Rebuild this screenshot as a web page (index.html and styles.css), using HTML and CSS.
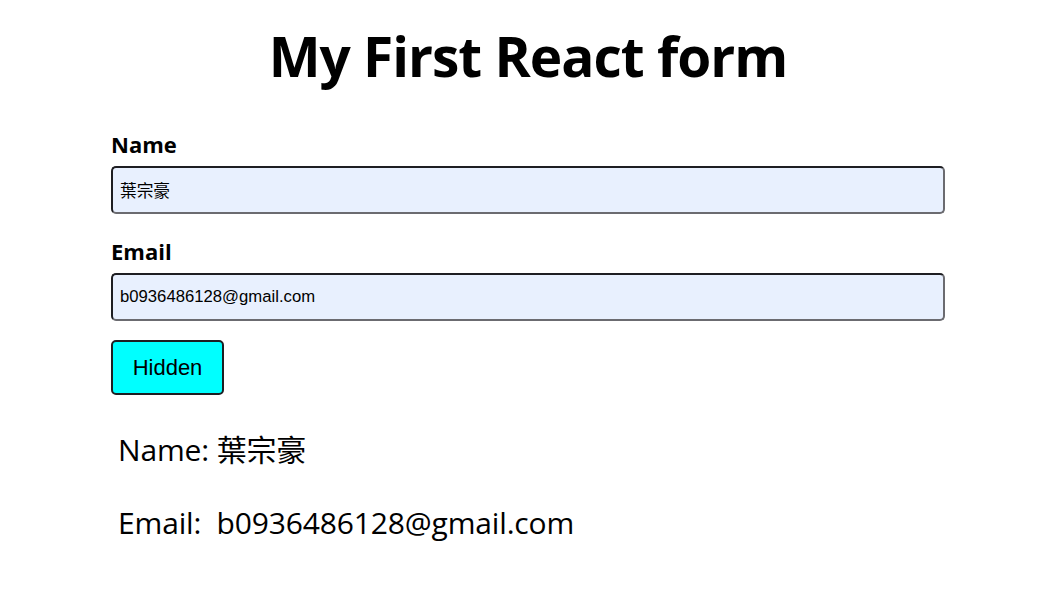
FILE: index.html
```html
<!DOCTYPE html>
<html lang="zh-Hant">
<head>
<meta charset="utf-8">
<title>My First React form</title>
<link rel="stylesheet" href="styles.css">
</head>
<body>
<div class="app">
  <h1 class="title">My First React form</h1>
  <form class="form">
    <label class="field">
      <span class="label">Name</span>
      <input class="input" type="text" value="葉宗豪">
    </label>
    <label class="field field-next">
      <span class="label">Email</span>
      <input class="input" type="text" value="b0936486128@gmail.com">
    </label>
    <button class="btn" type="button">Hidden</button>
  </form>
  <div class="output">
    <p class="out-line">Name: 葉宗豪</p>
    <p class="out-line">Email:&nbsp; b0936486128@gmail.com</p>
  </div>
</div>
</body>
</html>
```
FILE: styles.css
```css
html, body {
  margin: 0;
  padding: 0;
  background: #ffffff;
}
body {
  font-family: "Open Sans", "Noto Sans CJK TC", sans-serif;
  color: #000;
}
.app {
  width: 834px;
  margin-left: 111px;
  display: flex;
  flex-direction: column;
}
.title {
  margin: 20px 0 0 0;
  text-align: center;
  font-size: 55px;
  line-height: 72px;
  font-weight: 700;
  letter-spacing: -1px;
}
.form {
  margin-top: 37px;
  display: flex;
  flex-direction: column;
  align-items: flex-start;
}
.field {
  display: flex;
  flex-direction: column;
  width: 100%;
}
.field-next {
  margin-top: 22px;
}
.label {
  font-size: 22px;
  font-weight: 700;
  line-height: 30px;
  margin-bottom: 7px;
}
.input {
  box-sizing: border-box;
  width: 100%;
  height: 48px;
  border: 2px solid #1e1e22;
  border-right-color: #6b6b70;
  border-bottom-color: #6b6b70;
  border-radius: 5px;
  background: #e8f0fe;
  padding: 0 0 0 7px;
  font-family: "Liberation Sans", "Noto Sans CJK TC", sans-serif;
  font-size: 16.7px;
  color: #000;
}
.btn {
  box-sizing: border-box;
  margin-top: 19px;
  width: 113px;
  height: 55px;
  background: #00ffff;
  border: 2px solid #1e1e22;
  border-radius: 5px;
  font-family: "Liberation Sans", sans-serif;
  font-size: 22px;
  color: #000;
  padding: 0;
}
.output {
  padding-left: 7px;
  margin-top: 34px;
}
.out-line {
  margin: 0 0 31px 0;
  font-size: 30px;
  line-height: 42px;
  font-weight: 400;
  letter-spacing: -0.15px;
}
```
